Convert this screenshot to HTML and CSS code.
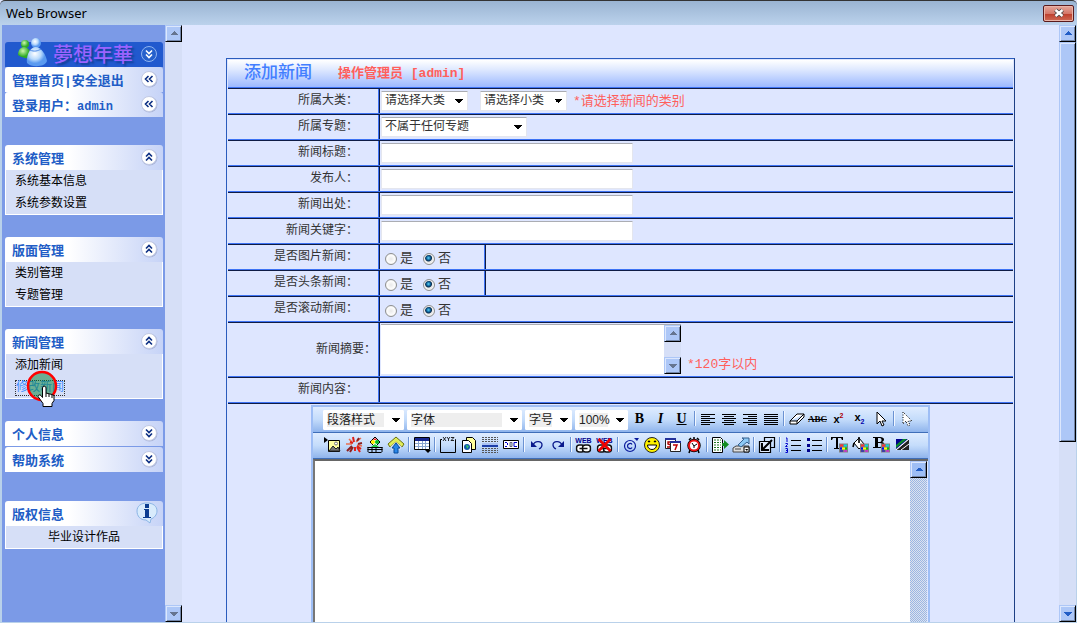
FILE: index.html
```html
<!DOCTYPE html>
<html lang="zh-CN">
<head>
  <meta charset="UTF-8">
  <meta name="viewport" content="width=device-width, initial-scale=1.0">
  <title>Web Browser</title>
  <link rel="stylesheet" href="styles.css">
</head>
<body>
  <!-- shared icon parts -->
  <svg class="defs" aria-hidden="true">
    <symbol id="up" viewBox="0 0 18 18">
      <circle cx="9.5" cy="9.5" r="8" fill="#a9b4d8"/><circle cx="9" cy="9" r="7.5" fill="#fff" stroke="#c3cbe4"/>
      <path d="M6 8.500 9 5.500l3 3M6 12.500l3-3 3 3" fill="none" stroke="#0c2f83" stroke-width="1.600"/>
    </symbol>
    <symbol id="down" viewBox="0 0 18 18">
      <circle cx="9.5" cy="9.5" r="8" fill="#a9b4d8"/><circle cx="9" cy="9" r="7.5" fill="#fff" stroke="#c3cbe4"/>
      <path d="M6 5.500l3 3 3-3M6 9.500l3 3 3-3" fill="none" stroke="#0c2f83" stroke-width="1.600"/>
    </symbol>
    <symbol id="left" viewBox="0 0 18 18">
      <circle cx="9.5" cy="9.5" r="8" fill="#a9b4d8"/><circle cx="9" cy="9" r="7.5" fill="#fff" stroke="#c3cbe4"/>
      <path d="M8.500 6l-3 3 3 3M12.500 6l-3 3 3 3" fill="none" stroke="#0c2f83" stroke-width="1.600"/>
    </symbol>
    <symbol id="grid" viewBox="0 0 9 9">
      <path fill="#808080" d="M0 0h9v9H0z"/>
      <path fill="#f33" d="M1 1h3v2H1z"/><path fill="#0dd" d="M5 1h3v2H5z"/>
      <path fill="#00f" d="M1 4h2v2H1z"/><path fill="#ff0" d="M3 4h3v2H3z"/><path fill="#0c0" d="M6 4h2v2H6z"/>
      <path fill="#00c" d="M1 7h3v1H1z"/><path fill="#f0f" d="M5 7h3v1H5z"/>
    </symbol>
    <symbol id="chain" viewBox="0 0 16 9">
      <rect x="1" y="1" width="8" height="7" rx="3" fill="#fff" stroke="#111" stroke-width="1.500"/>
      <rect x="7" y="1" width="8" height="7" rx="3" fill="#fff" stroke="#111" stroke-width="1.500"/>
      <path d="M4 4.500h8" stroke="#111" stroke-width="1.600"/>
    </symbol>
  </svg>

  <header class="titlebar">
    <span>Web Browser</span>
    <button class="close" aria-label="Close">
      <svg width="12" height="10" viewBox="0 0 12 10"><path d="M2.500 2l7 6M9.500 2l-7 6" stroke="#444" stroke-width="4.200"/><path d="M2.500 2l7 6M9.500 2l-7 6" stroke="#fff" stroke-width="2.400"/></svg>
    </button>
  </header>

  <div class="window">
    <nav class="sidebar">
      <div class="block top">
        <div class="logo">
          <svg width="30" height="30" viewBox="0 0 30 30">
            <defs>
              <radialGradient id="blue" cx="40%" cy="35%"><stop offset="0" stop-color="#fff"/><stop offset=".6" stop-color="#b9dafc"/><stop offset="1" stop-color="#5a9af0"/></radialGradient>
              <radialGradient id="green" cx="40%" cy="35%"><stop offset="0" stop-color="#cff7b0"/><stop offset="1" stop-color="#2fab25"/></radialGradient>
            </defs>
            <circle cx="7" cy="7" r="4" fill="url(#green)"/>
            <path d="M6 10c5 0 7 5 6 11-4 1-9-1-12-3 0-4 2-8 6-8z" fill="url(#green)"/>
            <circle cx="18" cy="6" r="5" fill="url(#blue)"/>
            <path d="M17 10c6-1 11 8 12 14-2 6-15 7-20 2-1-6 2-15 8-16z" fill="url(#blue)"/>
            <path d="M12 13c4 2 8 1 11-1" fill="none" stroke="#4d8ae6"/>
          </svg>
          <span>夢想年華</span>
          <button class="toggle" aria-label="收起">
            <svg width="18" height="18" viewBox="0 0 18 18"><circle cx="9" cy="9" r="7.5" fill="#2560cc" stroke="#90b4f0"/><path d="M6 5.500l3 3 3-3M6 9.500l3 3 3-3" fill="none" stroke="#fff" stroke-width="1.600"/></svg>
          </button>
        </div>
        <div class="head"><span><a href="#">管理首页</a>|<a href="#">安全退出</a></span><button class="toggle" aria-label="展开"><svg width="18" height="18"><use href="#left"/></svg></button></div>
        <div class="head"><span>登录用户：<small>admin</small></span><button class="toggle" aria-label="展开"><svg width="18" height="18"><use href="#left"/></svg></button></div>
      </div>

      <div class="block">
        <div class="head"><span>系统管理</span><button class="toggle" aria-label="收起"><svg width="18" height="18"><use href="#up"/></svg></button></div>
        <ul>
          <li><a href="#">系统基本信息</a></li>
          <li><a href="#">系统参数设置</a></li>
        </ul>
      </div>

      <div class="block">
        <div class="head"><span>版面管理</span><button class="toggle" aria-label="收起"><svg width="18" height="18"><use href="#up"/></svg></button></div>
        <ul>
          <li><a href="#">类别管理</a></li>
          <li><a href="#">专题管理</a></li>
        </ul>
      </div>

      <div class="block">
        <div class="head"><span>新闻管理</span><button class="toggle" aria-label="收起"><svg width="18" height="18"><use href="#up"/></svg></button></div>
        <ul>
          <li><a href="#">添加新闻</a></li>
          <li class="current"><a href="#">修改新闻</a>
            <svg class="pointer" width="32" height="38" viewBox="0 0 32 38">
              <circle cx="16" cy="16" r="14" fill="#008030" fill-opacity=".5" stroke="#f00" stroke-width="2.500"/>
              <path d="M17 16.500c1.500-1 3 0 3 1.500v5l2 .5 2 .5 2 .5 2 1v5l-2 3v3H17v-3l-5-7c0-2 2-2 3-1l1.500 2V18z" fill="#fff" stroke="#000"/>
              <path d="M20 23v4M23 24v3M26 25v3" stroke="#000"/>
            </svg>
          </li>
        </ul>
      </div>

      <div class="block">
        <div class="head"><span>个人信息</span><button class="toggle" aria-label="展开"><svg width="18" height="18"><use href="#down"/></svg></button></div>
        <div class="head next"><span>帮助系统</span><button class="toggle" aria-label="展开"><svg width="18" height="18"><use href="#down"/></svg></button></div>
      </div>

      <div class="block about">
        <div class="head"><span>版权信息</span>
          <svg width="22" height="22" viewBox="0 0 22 22"><path d="M11 1c6 0 10 3 10 8 0 4-3 7-6 8l-1 4-4-3C4 18 1 14 1 9c0-5 4-8 10-8z" fill="#d8ebfc" stroke="#8bb5e6"/><path d="M9 2h4v4H9zM8 7h5v8h2v1H7v-1h2V8H8z" fill="#0b3d91"/></svg>
        </div>
        <ul><li>毕业设计作品</li></ul>
      </div>
    </nav>
    <div class="scroll off"><button class="arrow up" aria-label="上"></button><div class="track"></div><button class="arrow down" aria-label="下"></button></div>

    <main class="main">
      <form class="panel">
        <h1>添加新闻 <small>操作管理员 [admin]</small></h1>

        <div class="row">
          <label class="name" for="big">所属大类：</label>
          <div class="value">
            <select id="big" class="w-small"><option>请选择大类</option></select>
            <select class="w-small second" aria-label="小类"><option>请选择小类</option></select>
            <span class="tip">*请选择新闻的类别</span>
          </div>
        </div>
        <div class="row">
          <label class="name" for="topic">所属专题：</label>
          <div class="value"><select id="topic" class="w-topic"><option>不属于任何专题</option></select></div>
        </div>
        <div class="row">
          <label class="name" for="title">新闻标题：</label>
          <div class="value"><input type="text" id="title"></div>
        </div>
        <div class="row">
          <label class="name" for="author">发布人：</label>
          <div class="value"><input type="text" id="author"></div>
        </div>
        <div class="row">
          <label class="name" for="source">新闻出处：</label>
          <div class="value"><input type="text" id="source"></div>
        </div>
        <div class="row">
          <label class="name" for="keyword">新闻关键字：</label>
          <div class="value"><input type="text" id="keyword"></div>
        </div>
        <div class="row">
          <span class="name">是否图片新闻：</span>
          <div class="value choice split"><label><input type="radio" name="pic">是</label><label><input type="radio" name="pic" checked>否</label></div>
          <div class="value rest"></div>
        </div>
        <div class="row">
          <span class="name">是否头条新闻：</span>
          <div class="value choice split"><label><input type="radio" name="top">是</label><label><input type="radio" name="top" checked>否</label></div>
          <div class="value rest"></div>
        </div>
        <div class="row">
          <span class="name">是否滚动新闻：</span>
          <div class="value choice"><label><input type="radio" name="roll">是</label><label><input type="radio" name="roll" checked>否</label></div>
        </div>
        <div class="row tall">
          <label class="name" for="summary">新闻摘要：</label>
          <div class="value">
            <div class="area">
              <textarea id="summary"></textarea>
              <div class="scroll off"><button type="button" class="arrow up" aria-label="上"></button><div class="track"></div><button type="button" class="arrow down" aria-label="下"></button></div>
            </div>
            <span class="tip">*120字以内</span>
          </div>
        </div>
        <div class="row">
          <label class="name" for="content">新闻内容：</label>
          <div class="value"></div>
        </div>

        <div class="editor-row">
          <div class="editor">
            <div class="toolbar">
              <select class="w-style" aria-label="段落样式"><option>段落样式</option></select>
              <select class="w-font" aria-label="字体"><option>字体</option></select>
              <select class="w-size" aria-label="字号"><option>字号</option></select>
              <select class="w-zoom" aria-label="缩放"><option>100%</option></select>
              <button type="button" class="letter">B</button>
              <button type="button" class="letter"><i>I</i></button>
              <button type="button" class="letter"><u>U</u></button>
              <hr>
              <button type="button" aria-label="左对齐"><svg viewBox="0 0 18 18"><path d="M2 4h14M2 6h9M2 8h14M2 10h9M2 12h14M2 14h9" class="line"/></svg></button>
              <button type="button" aria-label="居中"><svg viewBox="0 0 18 18"><path d="M2 4h14M4 6h10M2 8h14M4 10h10M2 12h14M4 14h10" class="line"/></svg></button>
              <button type="button" aria-label="右对齐"><svg viewBox="0 0 18 18"><path d="M2 4h14M7 6h9M2 8h14M7 10h9M2 12h14M7 14h9" class="line"/></svg></button>
              <button type="button" aria-label="两端对齐"><svg viewBox="0 0 18 18"><path d="M2 4h14M2 6h14M2 8h14M2 10h14M2 12h14M2 14h14" class="line"/></svg></button>
              <hr>
              <button type="button" aria-label="清除"><svg viewBox="0 0 18 18"><path d="M2 11 9 4h7v3l-7 7H2zM2 11h7l7-7M9 11v3" fill="#fff" stroke="#000"/></svg></button>
              <button type="button" class="strike"><s>ABC</s></button>
              <button type="button" class="script">x<sup>2</sup></button>
              <button type="button" class="script low">x<sub>2</sub></button>
              <button type="button" aria-label="选择"><svg viewBox="0 0 18 18"><path d="M5 2v12l3-3 2 5 2-1-2-4h4z" fill="#fff" stroke="#000"/></svg></button>
              <hr>
              <button type="button" aria-label="取消选择"><svg viewBox="0 0 18 18"><path d="M5 2v12l3-3 2 5 2-1-2-4h4z" fill="#fff" stroke="#000" stroke-dasharray="1 1.500"/></svg></button>
            </div>

            <div class="toolbar icons">
              <button type="button" aria-label="图片"><svg viewBox="0 0 18 18"><path d="M0 1l4 3-4 3z"/><path d="M4.500 4.500h11v11h-11z" fill="#ffffa0" stroke="#000"/><path d="M5 15l4-5 3 3 2-2 2 4z" fill="#777" stroke="#222"/><circle cx="12" cy="7.5" r="1.5" fill="#fff" stroke="#777"/></svg></button>
              <button type="button" aria-label="动画"><svg viewBox="0 0 18 18"><path d="M7 6 4 3M7 8H1M11 6l5-4M12 9l5 1" stroke="#e87050" stroke-width="1.500"/><path d="M9 6 8 1M12 11l3 5M10 11v4" stroke="#e02018" stroke-width="2"/><path d="M7 10l-5 5M8 11l-3 5M12 5l2-3M13 8l4-1" stroke="#8c2020" stroke-width="2"/><path d="M8 7l-3-1M12 10l4 3" stroke="#e02018" stroke-width="2"/></svg></button>
              <button type="button" aria-label="媒体"><svg viewBox="0 0 18 18"><path d="M9 1l5 5-5 5-5-5z" fill="#fff" stroke="#000"/><circle cx="7" cy="6" r="2" fill="#fe0"/><circle cx="11" cy="6" r="2" fill="#0b2"/><path d="M9 2l2 2H7z" fill="#e22"/><path d="M5 11l4-3 4 3" fill="#2c4"/><path d="M1.500 11.500h15M1.500 13.500h15M2.500 16.500h13M2 11v5M16 11v5M6 12v4M10 12v4" fill="none" stroke="#000"/></svg></button>
              <button type="button" aria-label="上传"><svg viewBox="0 0 18 18"><path d="M9 1l8 7-2 3-6-5-6 5-2-3z" fill="#e2ed58" stroke="#697010"/><path d="M3.500 10.500 9 6l5.500 4.500L13 14H5z" fill="#dde3f4"/><path d="M9 7l4 5h-2v5H7v-5H5z" fill="#2a86e8" stroke="#064a9c"/></svg></button>
              <hr>
              <button type="button" aria-label="表格"><svg viewBox="0 0 18 18"><path d="M1.500 1.500h15v12h-15z" fill="#fff" stroke="#000"/><path d="M2 2h14v3H2z" fill="#15278f"/><path d="M2 7.500h14M2 10.500h14M5.500 5v8M9.500 5v8M12.500 5v8" stroke="#8aa6cf"/><path d="M12 14h6l-3 3z"/></svg></button>
              <hr>
              <button type="button" aria-label="字段"><svg viewBox="0 0 18 18"><path d="M3 3.500H1.500v13h15v-13H16" fill="none" stroke="#000"/><path d="M4 1l3 4M7 1 4 5M8 1l1.500 2L11 1M9.500 3v2M12 1.500h3l-3 3h3" fill="none" stroke="#111" stroke-width=".9"/></svg></button>
              <button type="button" aria-label="粘贴"><svg viewBox="0 0 18 18"><path d="M6.500 1.500h6l3 3v9h-9z" fill="#ff9" stroke="#000"/><path d="M2.500 4.500h6l3 3v9h-9z" fill="#fff" stroke="#000"/><circle cx="7" cy="11" r="3" fill="#15a"/><path d="M6 9l3 1-2 3z" fill="#3c6"/></svg></button>
              <button type="button" aria-label="分页"><svg viewBox="0 0 18 18"><path d="M1 1.500h16M1 3.500h16M1 5.500h16M1 12.500h16M1 14.500h16M1 16.500h16" stroke="#555" stroke-dasharray="2 1"/><path d="M1 7h16v4H1z" fill="#1c3faa"/><path d="M1 7h16v2H1z" fill="#abc4f4"/></svg></button>
              <button type="button" aria-label="表单"><svg viewBox="0 0 18 18"><path d="M1.500 4.500h15v8h-15z" fill="#fff" stroke="#000"/><path d="M3 6.500h2M5 7l1 1-1 1M3 10.500h2M15 6.500h-3v4h3" fill="none" stroke="#00c"/><path d="M8 6.500h2v4H8z" fill="#cde" stroke="#667"/></svg></button>
              <hr>
              <button type="button" aria-label="撤消"><svg viewBox="0 0 18 18"><path d="M5 9c2-5 9-4 9 0 0 2-1 3-3 4" fill="none" stroke="#0a1a8c" stroke-width="1.300"/><path d="M3 5v6h6z" fill="#0a1a8c"/></svg></button>
              <button type="button" aria-label="重做"><svg viewBox="0 0 18 18"><path d="M13 9C11 4 4 5 4 9c0 2 1 3 3 4" fill="none" stroke="#0a1a8c" stroke-width="1.300"/><path d="M15 5v6H9z" fill="#0a1a8c"/></svg></button>
              <hr>
              <button type="button" class="web" aria-label="链接"><b>WEB</b><svg viewBox="0 0 16 9"><use href="#chain"/></svg></button>
              <button type="button" class="web" aria-label="取消链接"><b>WEB</b><svg viewBox="0 0 16 9"><use href="#chain"/></svg><svg class="cut" viewBox="0 0 16 14"><path d="M2 1l12 12M14 1 2 13" stroke="#f00000" stroke-width="2.500"/></svg></button>
              <hr>
              <button type="button" aria-label="符号"><svg viewBox="0 0 18 18"><circle cx="8" cy="10" r="5.5" fill="none" stroke="#0a1a9c" stroke-width="1.200"/><path d="M10 8.500c-1-2-4.500-1-4.500 1.500s3.500 3.500 4.500 1.500" fill="none" stroke="#0a1a9c" stroke-width="1.200"/><path d="M12 2h5l-2 3z" fill="#0a1a9c"/></svg></button>
              <button type="button" aria-label="表情"><svg viewBox="0 0 18 18"><circle cx="9" cy="9" r="7.5" fill="#fff200" stroke="#222"/><path d="M5 6l1-1 1 1M11 6l1-1 1 1" fill="none" stroke="#000" stroke-width="1.200"/><path d="M4.500 9h9c0 6-9 6-9 0z" fill="#fff" stroke="#000"/></svg></button>
              <button type="button" aria-label="日期"><svg viewBox="0 0 18 18"><path d="M1.500 2.500h10v10h-10z" fill="#fff" stroke="#222"/><path d="M1 2h11v2H1z" fill="#22309a"/><path d="M7 6H4v2l3 1-1 2H3" fill="none" stroke="#a00" stroke-width="1.400"/><path d="M6.500 5.500h10v10h-10z" fill="#fff" stroke="#222"/><path d="M6 5h11v2H6z" fill="#22309a"/><path d="M9 9h4l-2 5" fill="none" stroke="#b00" stroke-width="1.500"/></svg></button>
              <button type="button" aria-label="时间"><svg viewBox="0 0 18 18"><path d="M4 4l2-2M14 4l-2-2M9 3V1M5 14l-1 3M13 14l1 3" stroke="#000" stroke-width="1.500"/><circle cx="9" cy="9.5" r="6" fill="#fff" stroke="#000" stroke-width="1.500"/><circle cx="9" cy="9.5" r="5" fill="#fff" stroke="#e11" stroke-width="2"/><path d="M7 7l2 3 3-2M9 10v2" fill="none" stroke="#000"/></svg></button>
              <hr>
              <button type="button" aria-label="导出"><svg viewBox="0 0 18 18"><path d="M1.500 1.500h8l2 2v13h-10z" fill="#fff" stroke="#000"/><path d="M3 4h7M3 6.500h7M3 9h7M3 11.500h7M3 14h7" stroke="#272" stroke-dasharray="2 1"/><path d="M11 7h2V4l5 4.500-5 4.500v-3h-2z" fill="#138c22"/></svg></button>
              <button type="button" aria-label="打印"><svg viewBox="0 0 18 18"><path d="M1 12l3-2h13v6H1z" fill="#ddd" stroke="#444"/><path d="M6 9l6-6-2-1h7v6l-2-2-6 5z" fill="#8cc8f5" stroke="#36618f"/><path d="M3 13h6" stroke="#444"/><path d="M12 11h5v5h-5z" fill="#fff" stroke="#000"/><path d="M13 13h3l-1 2z"/></svg></button>
              <hr>
              <button type="button" aria-label="全屏"><svg viewBox="0 0 18 18"><path d="M6.500 1.500h10v10h-10z" fill="none" stroke="#000" stroke-width="1.200"/><path d="M1.500 5.500h11v11h-11z" fill="#dfeafc" stroke="#000" stroke-width="1.200"/><path d="M14 4l-9 9M4 7v7h7" fill="none" stroke="#000" stroke-width="2"/></svg></button>
              <hr>
              <button type="button" aria-label="编号"><svg viewBox="0 0 18 18"><path d="M7 4h10M7 9h10M7 14h10" class="line"/><path d="M2 2h1v4M1.500 7.500h2v1l-2 2h2M1.500 12.500h2v4h-2M2 14.500h1" fill="none" stroke="#00c"/></svg></button>
              <button type="button" aria-label="列表"><svg viewBox="0 0 18 18"><path d="M7 4h10M7 9h10M7 14h10" class="line"/><path d="M2 2h3v3H2zM2 8h3v3H2zM2 13h3v3H2z" fill="#00008c"/></svg></button>
              <hr>
              <button type="button" aria-label="文字颜色"><svg viewBox="0 0 18 18"><path d="M0 1h12v3h-1l-1-2H7v10h2v1H3v-1h2V2H2L1 4H0z"/><use href="#grid" x="8" y="7" width="9" height="10"/></svg></button>
              <button type="button" aria-label="填充颜色"><svg viewBox="0 0 18 18"><path d="M2 7l5-5 5 6-5 5z" fill="#fff" stroke="#000"/><path d="M7 1v6M2 7l-1 4" stroke="#000" stroke-width="1.600"/><use href="#grid" x="8" y="7" width="9" height="10"/></svg></button>
              <button type="button" aria-label="背景颜色"><svg viewBox="0 0 18 18"><path d="M0 1h7c5 0 5 4 2 5 4 1 3 6-2 6H0v-1h2V2H0zM5 2v4h2c2 0 2-4 0-4zM5 7v4h2c3 0 3-4 0-4z" fill-rule="evenodd"/><use href="#grid" x="8" y="7" width="9" height="10"/></svg></button>
              <button type="button" aria-label="背景图"><svg viewBox="0 0 18 18"><path d="M2 3h12L2 13z" fill="#00008c"/><path d="M2 9l7-6h4L2 12z" fill="#0a8a2a"/><path d="M15 3 2 14h13z" fill="#222"/><path d="M2 14 15 3M7 14l8-6" stroke="#fff"/></svg></button>
            </div>

            <div class="edit">
              <textarea id="content"></textarea>
              <div class="scroll dotted"><button type="button" class="arrow up" aria-label="上"></button><div class="track"></div></div>
            </div>
          </div>
        </div>
      </form>
    </main>
    <div class="scroll page"><button class="arrow up" aria-label="上"></button><div class="track"><div class="thumb"></div></div><button class="arrow down" aria-label="下"></button></div>
  </div>
</body>
</html>
```
FILE: styles.css
```css
* {
  box-sizing: border-box;
}
body {
  margin: 0;
  height: 100vh;
  display: flex;
  flex-direction: column;
  overflow: hidden;
  background: #dee6ff;
  color: #333;
  font-family: "Liberation Mono", "Noto Sans CJK SC", monospace;
  font-size: 12px;
}
button, select, input, textarea {
  margin: 0;
  padding: 0;
  border: 0;
  border-radius: 0;
  font: inherit;
  color: inherit;
}
button {
  background: none;
}
a {
  color: inherit;
  text-decoration: none;
}
svg {
  display: block;
}
.defs {
  position: absolute;
  width: 0;
  height: 0;
}

/* window frame */
.titlebar {
  flex: none;
  display: flex;
  align-items: center;
  justify-content: space-between;
  height: 25px;
  padding: 0 3px 0 6px;
  border-top: 1px solid #333;
  border-radius: 5px 5px 0 0;
  background: linear-gradient(#9ab4d2, #bbd2ec);
  color: #000;
  font-family: "Noto Sans", sans-serif;
  font-size: 13px;
}
.close {
  display: flex;
  align-items: center;
  justify-content: center;
  width: 31px;
  height: 17px;
  border: 1px solid #5a1a1c;
  border-radius: 2px;
  background: linear-gradient(#e4a79b, #d5786a 50%, #bd3d2b 51%, #cf6a55);
  box-shadow: inset 0 0 0 1px #e9b3a8;
}
.window {
  flex: 1;
  min-height: 0;
  display: flex;
  border: 1px solid #b9d1ea;
  border-width: 0 1px 1px 2px;
}

/* scrollbars */
.scroll {
  flex: none;
  display: flex;
  flex-direction: column;
  width: 17px;
  background: #d6dff7;
}
.track {
  flex: 1;
}
.arrow {
  width: 17px;
  height: 17px;
  border: 1px solid #000;
  border-color: #adc7f7 #000 #000 #adc7f7;
  box-shadow: inset 1px 1px #dce7fd, inset -1px -1px #7386a8;
}
.arrow.up {
  background: conic-gradient(from 135deg at 50% 0, #215dc6 90deg, transparent 0) 4px 5px / 8px 4px no-repeat #adc7f7;
}
.arrow.down {
  background: conic-gradient(from -45deg at 50% 100%, #215dc6 90deg, transparent 0) 4px 6px / 8px 4px no-repeat #adc7f7;
}
.off .arrow.up {
  background: conic-gradient(from 135deg at 50% 0, #667590 90deg, transparent 0) 4px 5px / 8px 4px no-repeat #adc7f7;
}
.off .arrow.down {
  background: conic-gradient(from -45deg at 50% 100%, #667590 90deg, transparent 0) 4px 6px / 8px 4px no-repeat #adc7f7;
}
.thumb {
  height: 71%;
  border: 1px solid #000;
  border-color: #adc7f7 #000 #000 #adc7f7;
  background: #adc7f7;
  box-shadow: inset 1px 1px #dce7fd, inset -1px -1px #7386a8;
}
.dotted {
  background: repeating-conic-gradient(#9ab6e4 0 25%, #dde3ee 0 50%) 0 0 / 2px 2px;
}
.dotted .arrow.up {
  background-color: #9ebef5;
}

/* left menu */
.sidebar {
  flex: none;
  width: 163px;
  padding: 17px 2px 0 3px;
  background: #7b9ae7;
}
.block {
  margin-bottom: 22px;
}
.block.top {
  margin-bottom: 28px;
}
.logo {
  display: flex;
  align-items: flex-end;
  height: 25px;
  padding: 0 5px 0 13px;
  border-radius: 3px 3px 0 0;
  background: #2159ce;
}
.logo span {
  flex: 1;
  padding-left: 5px;
  color: #9a63ff;
  font-family: "Noto Sans CJK TC", sans-serif;
  font-size: 20px;
  font-weight: 500;
  line-height: 27px;
  text-shadow: 2px 2px 2px #123d94;
  white-space: nowrap;
}
.logo .toggle {
  padding-bottom: 4px;
}
.head {
  display: flex;
  align-items: center;
  justify-content: space-between;
  height: 25px;
  padding: 0 5px 0 7px;
  border-radius: 3px 3px 0 0;
  background: linear-gradient(90deg, #fff 40%, #c6d3f7);
  color: #215dc6;
  font-size: 13px;
  font-weight: bold;
}
.head span {
  padding-top: 5px;
  line-height: 20px;
  white-space: nowrap;
}
.head .toggle {
  padding-bottom: 2px;
}
.head small {
  font-size: 12px;
}
.head.next {
  margin-top: 1px;
}
.block ul {
  margin: 0;
  padding: 0;
  list-style: none;
  border: 1px solid #fff;
  border-top: 0;
  background: #d6dff7;
  color: #000;
}
.block li {
  height: 22px;
  padding-left: 9px;
  line-height: 24px;
}
.current {
  position: relative;
}
.current a {
  display: inline-block;
  height: 16px;
  line-height: 14px;
  border: 1px dotted #333;
  color: #428eff;
}
.pointer {
  position: absolute;
  left: 20px;
  top: -6px;
  z-index: 1;
}
.about {
  margin-top: 29px;
}
.about .head svg {
  margin-bottom: 2px;
}
.about li {
  padding: 0;
  text-align: center;
}

/* news form */
.main {
  flex: 1;
  min-width: 0;
  display: flex;
  flex-direction: column;
  padding: 33px 44px 0;
}
.panel {
  flex: 1;
  min-height: 0;
  display: flex;
  flex-direction: column;
  padding: 1px 1px 0;
  border: 1px solid #2a5cbd;
  border-right-color: #1d3f85;
  border-bottom: 0;
}
h1 {
  display: flex;
  align-items: center;
  gap: 26px;
  flex: none;
  height: 28px;
  margin: 0;
  padding-left: 16px;
  border-bottom: 1px solid #3d73f5;
  background: linear-gradient(#fff, #dfe9ff 35%, #9cb9ff);
  color: #427eff;
  font-size: 17px;
  font-weight: 500;
  line-height: 24px;
}
h1 small {
  color: #ff5f5c;
  font-size: 13px;
  font-weight: bold;
}
.row {
  flex: none;
  display: flex;
  height: 26px;
  border-top: 1px solid #0f1c45;
  border-bottom: 1px solid #3d73f5;
}
.name {
  flex: none;
  width: 151px;
  padding-right: 20px;
  border-right: 1px solid #3d73f5;
  line-height: 25px;
  text-align: right;
}
.value {
  flex: 1;
  display: flex;
  align-items: center;
  padding-left: 1px;
  border-left: 1px solid #0f1c45;
}
.value input[type="text"] {
  width: 252px;
  height: 20px;
  padding: 0 4px;
}
input[type="text"], select {
  background-color: #fff;
  border: 1px solid #e4e6ee;
  border-top-color: #abadb3;
  border-radius: 1px;
}
select {
  appearance: none;
  height: 20px;
  padding: 0 18px 0 3px;
  background: conic-gradient(from -45deg at 50% 100%, #000 90deg, transparent 0) right 4px center / 8px 4px no-repeat #fff;
}
.w-small {
  width: 87px;
}
.second {
  margin-left: 12px;
}
.w-topic {
  width: 146px;
}
.tip {
  padding-top: 2px;
  margin-left: 6px;
  color: #ff5f5c;
  font-size: 13px;
  line-height: 18px;
}
.choice {
  gap: 10px;
  padding: 3px 0 0 5px;
  font-size: 13px;
}
.choice label {
  display: flex;
  align-items: center;
  gap: 3px;
  line-height: 18px;
}
.choice.split {
  flex: none;
  width: 106px;
  border-right: 1px solid #3d73f5;
}
input[type="radio"] {
  appearance: none;
  width: 12px;
  height: 12px;
  border: 1px solid #8e8f8f;
  border-radius: 50%;
  background: radial-gradient(#e9e9e9, #fff 60%, #ccc);
  box-shadow: inset 0 0 0 1px #f4f4f4;
}
input[type="radio"]:checked {
  background: radial-gradient(circle at 45% 40%, #5fd3f7, #0b6299 2px, #0a2c50 3px, #e9e9e9 4px);
}
.tall {
  height: 55px;
}
.tall .name {
  padding-right: 2px;
  line-height: 54px;
}
.tall .value {
  align-items: flex-end;
  padding-bottom: 2px;
}
.area {
  display: flex;
  width: 300px;
  height: 50px;
  border-top: 1px solid #abadb3;
}
textarea {
  flex: 1;
  min-width: 0;
  resize: none;
  background: #fff;
}

/* rich text editor */
.editor-row {
  flex: 1;
  min-height: 0;
  display: flex;
  justify-content: center;
  padding-top: 1px;
  border-top: 1px solid #0f1c45;
}
.editor {
  display: flex;
  flex-direction: column;
  width: 619px;
  border: 2px solid #9ebef5;
  border-bottom: 0;
}
.toolbar {
  flex: none;
  display: flex;
  align-items: center;
  height: 26px;
  padding-left: 10px;
  border-bottom: 1px solid #3f6eb8;
  background: linear-gradient(#dfecff, #c4dcfb 50%, #8fb4ec);
  color: #000;
}
.toolbar.icons {
  padding-left: 9px;
}
.toolbar select {
  flex: none;
  margin-right: 3px;
  border-color: #fff;
  color: #222;
  font-family: "Liberation Sans", "Noto Sans CJK SC", sans-serif;
  background: conic-gradient(from -45deg at 50% 100%, #000 90deg, transparent 0) right 3px center / 8px 4px no-repeat, linear-gradient(#eee, #eee) 3px 2px / calc(100% - 22px) 14px no-repeat #fff;
}
.toolbar .w-style {
  width: 81px;
}
.toolbar .w-font {
  width: 115px;
}
.toolbar .w-size {
  width: 47px;
  padding-right: 0;
}
.toolbar .w-zoom {
  width: 53px;
  padding-right: 0;
  margin-right: 1px;
}
.toolbar button {
  flex: none;
  display: flex;
  align-items: center;
  justify-content: center;
  width: 21px;
  height: 22px;
  margin-bottom: 2px;
}
.toolbar button svg {
  width: 18px;
  height: 18px;
}
.toolbar hr {
  flex: none;
  width: 2px;
  height: 15px;
  margin: 0 1px 2px 2px;
  border: 0;
  border-left: 1px solid #6b93d3;
  background: #f2f7ff;
}
.line {
  fill: none;
  stroke: #000;
  shape-rendering: crispEdges;
}
.toolbar .letter {
  font-family: "Liberation Serif", serif;
  font-size: 14px;
  font-weight: bold;
}
.toolbar .strike {
  font-family: "Liberation Serif", serif;
  font-size: 9px;
  font-weight: bold;
}
.toolbar .script {
  font-family: "Liberation Sans", sans-serif;
  font-size: 11px;
  font-weight: bold;
}
.script sup, .script sub {
  font-size: 7px;
}
.script sup {
  margin-bottom: 7px;
  color: #a00;
}
.script sub {
  margin-top: 10px;
  color: #00a;
}
.toolbar .low {
  padding-bottom: 4px;
}
.toolbar .web {
  flex-direction: column;
  position: relative;
}
.web b {
  color: #00008c;
  font-family: "Liberation Sans", sans-serif;
  font-size: 7px;
  line-height: 7px;
}
.toolbar .web svg {
  width: 17px;
  height: 9px;
}
.toolbar .web .cut {
  position: absolute;
  left: 2px;
  top: 4px;
  height: 14px;
}
.edit {
  flex: 1;
  min-height: 0;
  display: flex;
  padding-right: 1px;
  border-top: 2px solid #666;
  border-left: 2px solid #777;
}
```
